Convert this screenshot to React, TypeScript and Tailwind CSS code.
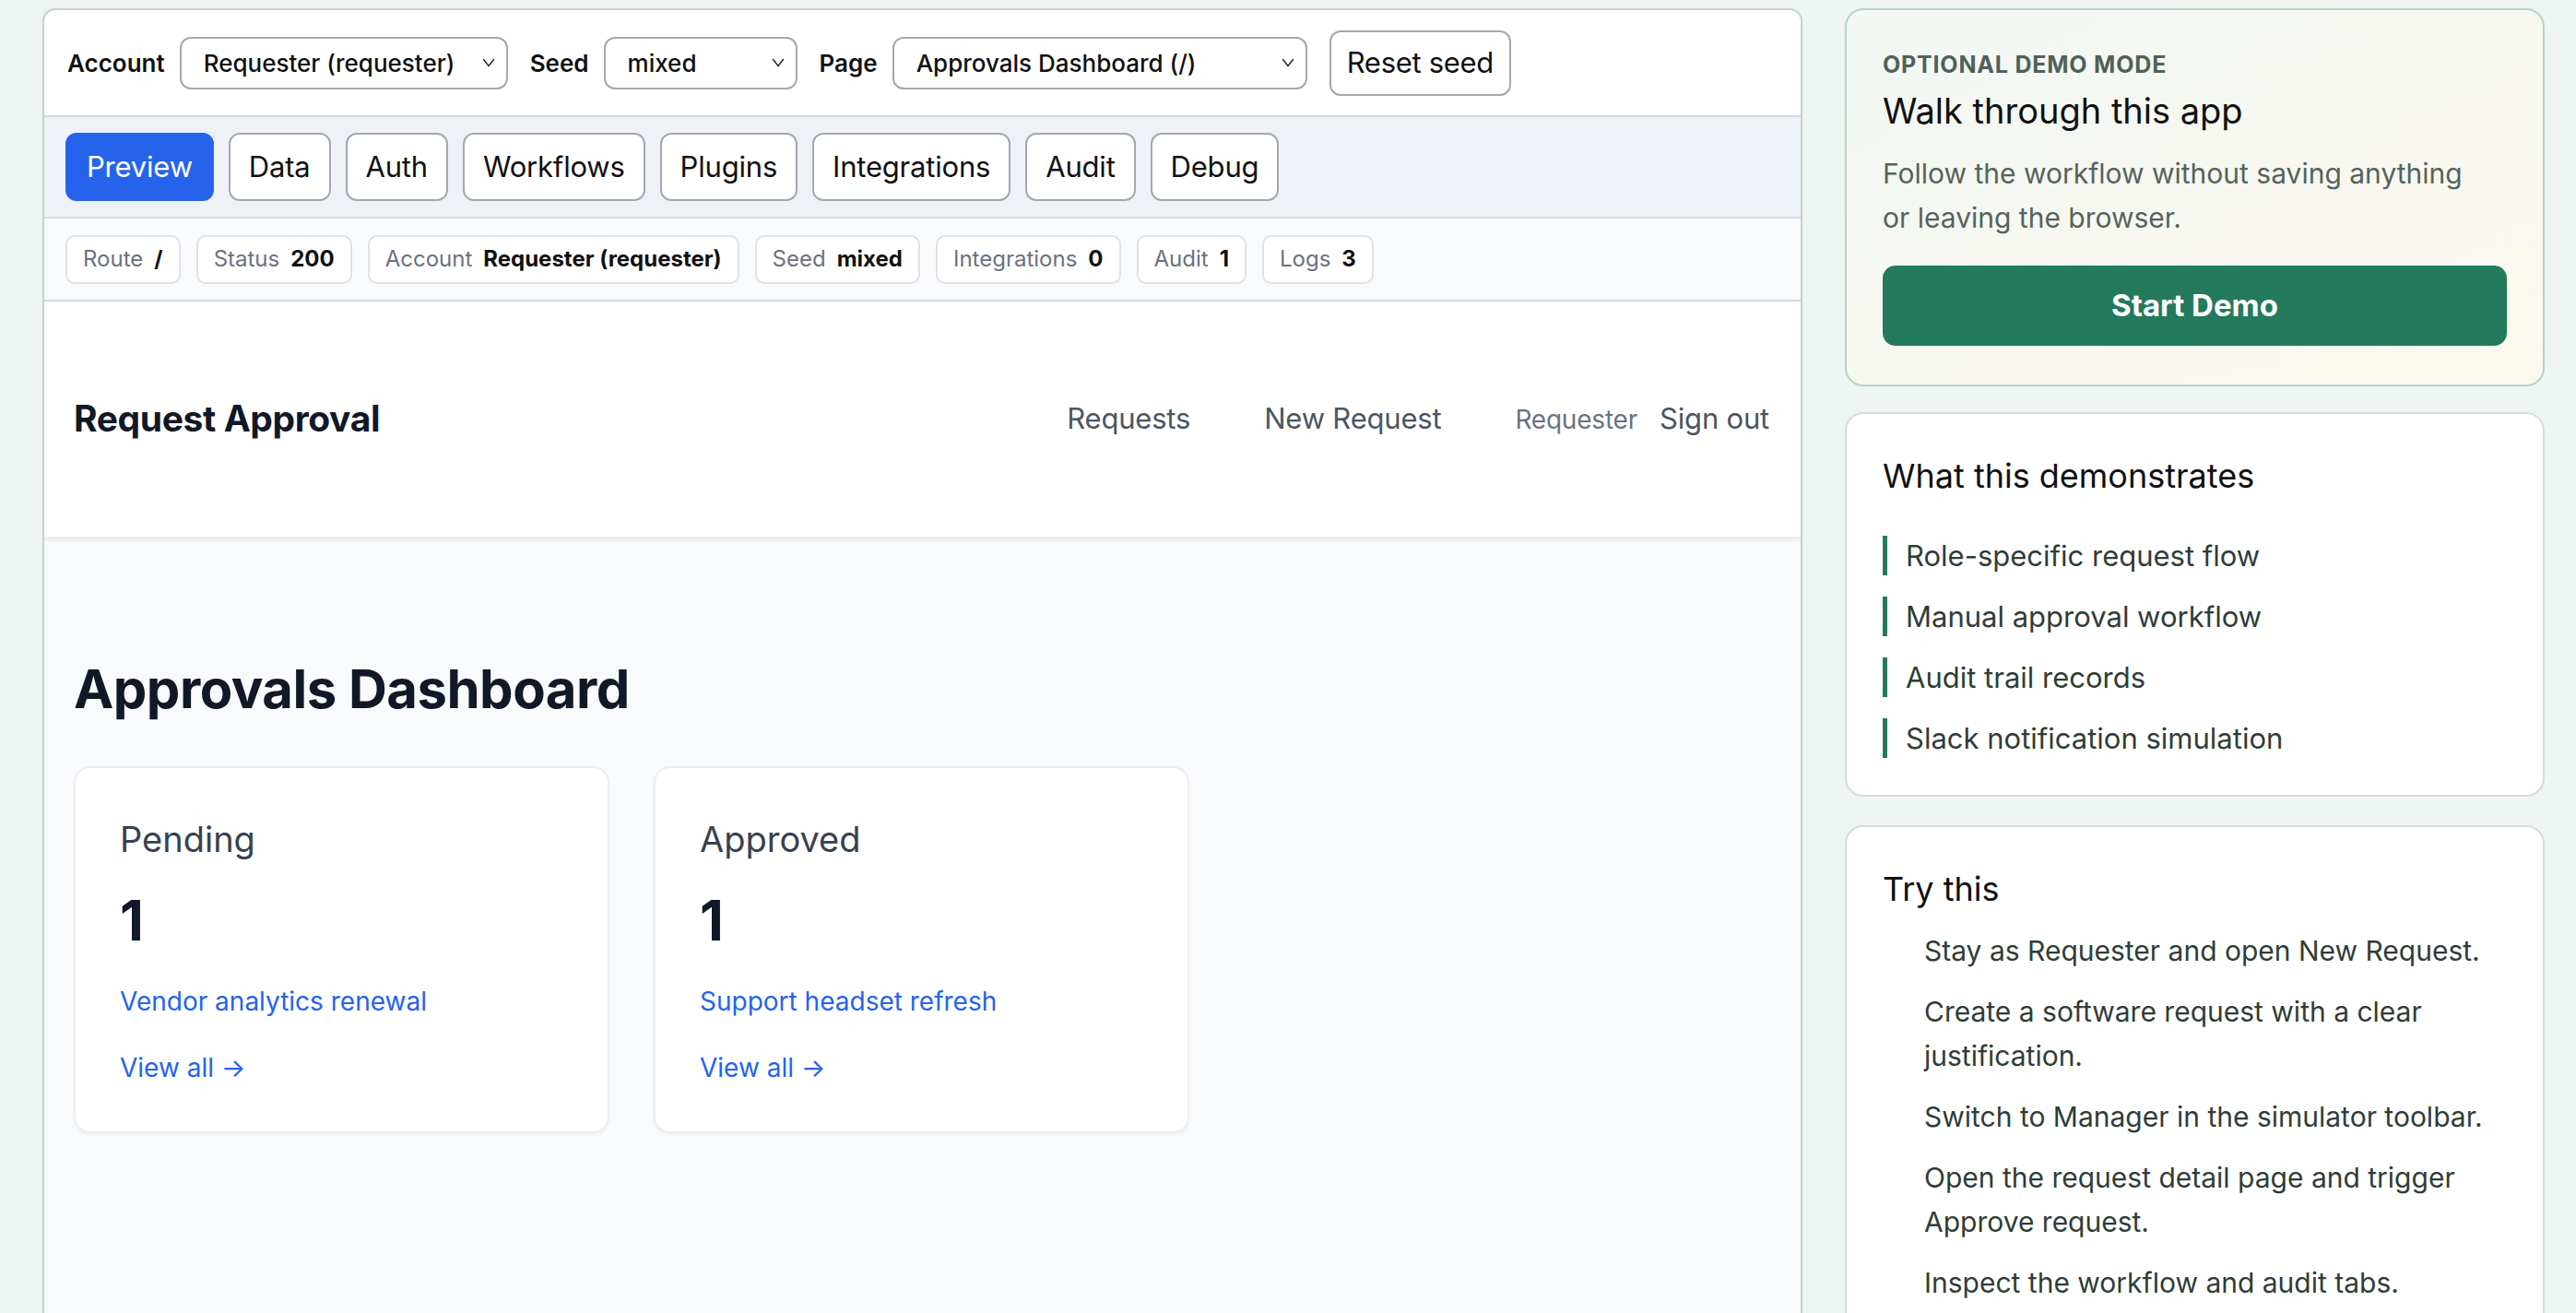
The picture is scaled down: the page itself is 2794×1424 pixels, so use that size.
import { ReactNode } from 'react';

// =========================
// DATA
// =========================

const tabs = [
  'Preview',
  'Data',
  'Auth',
  'Workflows',
  'Plugins',
  'Integrations',
  'Audit',
  'Debug',
];

const stats: [string, string][] = [
  ['Route', '/'],
  ['Status', '200'],
  ['Account', 'Requester (requester)'],
  ['Seed', 'mixed'],
  ['Integrations', '0'],
  ['Audit', '1'],
  ['Logs', '3'],
];

const demonstrates = [
  'Role-specific request flow',
  'Manual approval workflow',
  'Audit trail records',
  'Slack notification simulation',
];

const steps = [
  'Stay as Requester and open New Request.',
  'Create a software request with a clear justification.',
  'Switch to Manager in the simulator toolbar.',
  'Open the request detail page and trigger Approve request.',
  'Inspect the workflow and audit tabs.',
];

const cards = [
  { title: 'Pending', count: '1', link: 'Vendor analytics renewal' },
  { title: 'Approved', count: '1', link: 'Support headset refresh' },
];

function Chevron() {
  return (
    <svg width="14" height="10" viewBox="0 0 14 10" fill="none">
      <polyline
        points="1.5,1.5 7,8.5 12.5,1.5"
        stroke="#222"
        strokeWidth="1.4"
        strokeLinecap="round"
        strokeLinejoin="round"
      />
    </svg>
  );
}

function FakeSelect({
  value,
  width,
}: {
  value: string;
  width: string;
}) {
  return (
    <div
      className={`${width} h-[57px] flex items-center justify-between pl-[24px] pr-[12px] border-2 border-[#a4a8ae] rounded-[12px] bg-white`}
    >
      <span className="text-[26px] font-medium text-[#111]">
        {value}
      </span>
      <Chevron />
    </div>
  );
}

function Label({ children }: { children: ReactNode }) {
  return (
    <span className="text-[26px] font-semibold text-[#111]">
      {children}
    </span>
  );
}

export default function App() {
  return (
    <div className="h-[1424px] overflow-hidden bg-[#eef4f1] flex gap-[46px] pl-[46px] pt-[9px] font-['Inter','Liberation_Sans',sans-serif]">

      {/* SIMULATOR PANEL */}
      <main className="w-[1909px] shrink-0 h-[1500px] border-2 border-[#c4d2cb] rounded-t-[14px] bg-white overflow-hidden flex flex-col">

        {/* TOOLBAR */}
        <div className="h-[114px] shrink-0 flex items-center gap-[24px] pl-[25px]">

          <div className="flex items-center gap-[16px]">
            <Label>Account</Label>
            <FakeSelect value="Requester (requester)" width="w-[356px]" />
          </div>

          <div className="flex items-center gap-[16px]">
            <Label>Seed</Label>
            <FakeSelect value="mixed" width="w-[210px]" />
          </div>

          <div className="flex items-center gap-[16px]">
            <Label>Page</Label>
            <FakeSelect value="Approvals Dashboard (/)" width="w-[450px]" />
          </div>

          <button className="h-[71px] px-[17px] border-2 border-[#a4a8ae] rounded-[12px] bg-white text-[31px] tracking-[-0.3px] text-[#111]">
            Reset seed
          </button>

        </div>

        {/* TABS */}
        <div className="h-[112px] shrink-0 flex items-center gap-[16px] pl-[23px] bg-[#eef2f7] border-y-2 border-[#d5d9de]">
          {tabs.map((t, i) => (
            <button
              key={t}
              className={
                i === 0
                  ? 'h-[74px] px-[21px] rounded-[12px] border-2 border-[#2563eb] bg-[#2563eb] text-white text-[31px] tracking-[-0.2px]'
                  : 'h-[74px] px-[20px] rounded-[12px] border-2 border-[#a4a8ae] bg-white text-[#111] text-[31px] tracking-[-0.2px]'
              }
            >
              {t}
            </button>
          ))}
        </div>

        {/* STATUS */}
        <div className="h-[90px] shrink-0 flex items-center gap-[17px] pl-[23px] bg-[#f8fafc] border-b-2 border-[#d5d9de]">
          {stats.map(([k, v]) => (
            <div
              key={k}
              className="h-[53px] flex items-center gap-[12px] px-[17px] rounded-[10px] border-2 border-[#dfe2e6] bg-white text-[24px]"
            >
              <span className="text-[#6b7280]">{k}</span>
              <span className="font-bold text-[#111]">{v}</span>
            </div>
          ))}
        </div>

        {/* APP HEADER */}
        <header className="h-[257px] shrink-0 flex items-center justify-between pl-[32px] pr-[34px] bg-white shadow-[0_2px_4px_rgba(0,0,0,0.06)] border-b-2 border-[#eceef1] relative">
          <span className="text-[39px] font-bold tracking-[-0.4px] text-[#111827]">
            Request Approval
          </span>
          <nav className="flex items-center gap-[80px] text-[31px] tracking-[-0.2px] text-[#4b5563]">
            <span>Requests</span>
            <span>New Request</span>
            <div className="flex items-center gap-[24px]">
              <span className="text-[28px] text-[#6b7280]">Requester</span>
              <span>Sign out</span>
            </div>
          </nav>
        </header>

        {/* DASHBOARD */}
        <section className="flex-1 bg-[#f8fafc] pl-[32px] pt-[120px]">
          <h1 className="text-[58px] font-bold text-[#111827] tracking-[-0.5px]">
            Approvals Dashboard
          </h1>

          <div className="flex gap-[48px] mt-[40px]">
            {cards.map((c) => (
              <div
                key={c.title}
                className="w-[581px] h-[398px] bg-white rounded-[18px] border-2 border-[#eceef1] shadow-[0_2px_4px_rgba(0,0,0,0.05)] pl-[48px] pt-[52px]"
              >
                <div className="text-[38px] text-[#374151] leading-[50px]">
                  {c.title}
                </div>
                <div className="text-[60px] font-bold text-[#111827] leading-[72px] mt-[27px]">
                  {c.count}
                </div>
                <div className="text-[28px] text-[#2563eb] leading-[40px] mt-[32px]">
                  {c.link}
                </div>
                <div className="text-[28px] text-[#2563eb] leading-[40px] mt-[32px]">
                  View all →
                </div>
              </div>
            ))}
          </div>
        </section>

      </main>

      {/* SIDEBAR */}
      <aside className="w-[759px] shrink-0 flex flex-col">

        {/* DEMO CARD */}
        <div className="h-[410px] shrink-0 rounded-[20px] border-2 border-[#b8d2c4] bg-gradient-to-br from-[#f2f7f4] to-[#fcf8ee] px-[39px] pt-[42px]">
          <div className="text-[25px] font-bold tracking-[0.8px] text-[#4f6158] leading-[34px]">
            OPTIONAL DEMO MODE
          </div>
          <div className="text-[38px] text-[#111] leading-[50px] mt-[8px]">
            Walk through this app
          </div>
          <p className="text-[30px] text-[#55635b] leading-[48px] mt-[19px]">
            Follow the workflow without saving anything
            <br />
            or leaving the browser.
          </p>
          <button className="w-full h-[87px] mt-[28px] rounded-[14px] bg-[#237a5c] text-white text-[33px] font-bold">
            Start Demo
          </button>
        </div>

        {/* DEMONSTRATES */}
        <div className="h-[417px] shrink-0 mt-[28px] rounded-[20px] border-2 border-[#d6ddd9] bg-white px-[39px] pt-[44px]">
          <div className="text-[36px] text-[#111] leading-[46px]">
            What this demonstrates
          </div>
          <ul className="mt-[42px] flex flex-col gap-[23px]">
            {demonstrates.map((d) => (
              <li
                key={d}
                className="border-l-[5px] border-[#237a5c] pl-[20px] text-[31px] text-[#2f3d36] leading-[43px]"
              >
                {d}
              </li>
            ))}
          </ul>
        </div>

        {/* TRY THIS */}
        <div className="mt-[31px] h-[600px] shrink-0 rounded-[20px] border-2 border-[#d6ddd9] bg-white px-[39px] pt-[44px]">
          <div className="text-[36px] text-[#111] leading-[46px]">
            Try this
          </div>
          <ol className="mt-[20px] pl-[45px] pr-[20px] flex flex-col gap-[18px]">
            {steps.map((s) => (
              <li
                key={s}
                className="text-[30px] text-[#2f3d36] leading-[48px]"
              >
                {s}
              </li>
            ))}
          </ol>
        </div>

      </aside>
    </div>
  );
}
